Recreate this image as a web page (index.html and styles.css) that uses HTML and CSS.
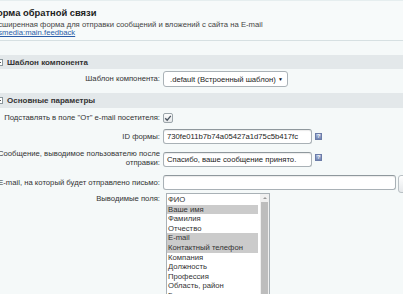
FILE: index.html
```html
<!DOCTYPE html>
<html lang="ru">
<head>
<meta charset="utf-8">
<link rel="stylesheet" href="styles.css">
</head>
<body>
<div class="page">
  <div class="head">
    <div class="title">Форма обратной связи</div>
    <div class="desc">Расширенная форма для отправки сообщений и вложений с сайта на E-mail</div>
    <div class="codeline"><a class="code" href="#">asmedia:main.feedback</a></div>
  </div>
  <div class="spacer"></div>

  <div class="band"><span class="toggle"></span>Шаблон компонента</div>
  <div class="row row-tpl">
    <div class="label">Шаблон компонента:</div>
    <div class="value">
      <div class="select"><span>.default (Встроенный шаблон)</span><span class="arrow">▼</span></div>
    </div>
  </div>

  <div class="band band-2"><span class="toggle"></span>Основные параметры</div>
  <div class="row row-check">
    <div class="label">Подставлять в поле "От" e-mail посетителя:</div>
    <div class="value">
      <span class="checkbox">
        <svg viewBox="0 0 10 10" width="10" height="10"><path d="M2.2 5.2 L4.2 7.2 L7.8 2.8" fill="none" stroke="#4a5560" stroke-width="1.3"/></svg>
      </span>
    </div>
  </div>
  <div class="row row-id">
    <div class="label">ID формы:</div>
    <div class="value">
      <div class="input">730fe011b7b74a05427a1d75c5b417fc</div>
      <span class="help">?</span>
    </div>
  </div>
  <div class="row row-msg">
    <div class="label">Сообщение, выводимое пользователю после отправки:</div>
    <div class="value">
      <div class="input">Спасибо, ваше сообщение принято.</div>
      <span class="help">?</span>
    </div>
  </div>
  <div class="row row-mail">
    <div class="label">E-mail, на который будет отправлено письмо:</div>
    <div class="value">
      <div class="input input-wide"></div>
      <span class="btn"></span>
    </div>
  </div>
  <div class="row row-list">
    <div class="label">Выводимые поля:</div>
    <div class="value">
      <div class="listbox">
        <div class="items">
          <div class="item">ФИО</div>
          <div class="item sel">Ваше имя</div>
          <div class="item">Фамилия</div>
          <div class="item">Отчество</div>
          <div class="item sel">E-mail</div>
          <div class="item sel">Контактный телефон</div>
          <div class="item">Компания</div>
          <div class="item">Должность</div>
          <div class="item">Профессия</div>
          <div class="item">Область, район</div>
          <div class="item">Город</div>
        </div>
        <div class="scroll"><span class="up"></span><span class="thumb"></span></div>
      </div>
    </div>
  </div>
</div>
</body>
</html>
```

FILE: styles.css
```css
html, body {
  margin: 0;
  padding: 0;
  background: #f5f9f9;
  overflow: hidden;
}
body {
  width: 403px;
  height: 294px;
  font-family: "Liberation Sans", Arial, sans-serif;
  color: #333;
}
.page {
  margin-left: -12px;
  width: 430px;
}
.head {
  height: 39px;
  border-top: 1px solid #e6eeef;
  border-bottom: 1px solid #d6e0e2;
  background: #f7fafa;
  padding-left: 1px;
}
.title {
  font-size: 9.4px;
  font-weight: bold;
  line-height: 11px;
  padding-top: 6px;
  color: #222;
}
.desc {
  font-size: 7.7px;
  line-height: 8px;
  margin-top: 3px;
  color: #444;
}
.codeline {
  font-size: 7.7px;
  line-height: 8px;
  padding-left: 5px;
}
.code {
  color: #2a5ca8;
  text-decoration: underline;
}
.spacer {
  height: 14px;
}
.band {
  height: 14px;
  background: #e3e8ea;
  font-size: 8px;
  font-weight: bold;
  color: #333;
  padding-left: 8px;
  display: flex;
  align-items: center;
}
.band-2 {
  height: 15px;
}
.toggle {
  width: 5px;
  height: 5px;
  border: 1px solid #8a979c;
  background: #fff;
  margin-right: 4px;
  position: relative;
}
.toggle::after {
  content: "";
  position: absolute;
  left: 1px;
  top: 2px;
  width: 3px;
  height: 1px;
  background: #555;
}
.row {
  display: flex;
  align-items: flex-start;
  box-sizing: border-box;
  font-size: 7.7px;
  line-height: 9px;
}
.label {
  flex: 0 0 175px;
  box-sizing: border-box;
  text-align: right;
  padding-right: 3px;
  color: #333;
}
.value {
  display: flex;
  align-items: flex-start;
}
.row-tpl {
  height: 24px;
  padding-top: 2px;
}
.row-tpl .label {
  line-height: 16px;
}
.select {
  width: 125px;
  height: 16px;
  box-sizing: border-box;
  border: 1px solid #aab2b7;
  border-radius: 3px;
  background: #fff;
  display: flex;
  align-items: center;
  justify-content: space-between;
  padding: 0 4px 0 6px;
  color: #222;
}
.arrow {
  font-size: 5px;
  color: #111;
}
.row-check {
  height: 18px;
  align-items: center;
}
.checkbox {
  width: 10px;
  height: 10px;
  box-sizing: border-box;
  border: 1px solid #9ca6ab;
  border-radius: 2px;
  background: linear-gradient(#fdfdfd, #e4e7e9);
  display: flex;
  margin-top: 1px;
}
.checkbox svg {
  margin: -1px;
}
.row-id {
  height: 21px;
  padding-top: 3px;
}
.row-id .label {
  line-height: 15px;
}
.row-msg {
  height: 23px;
  padding-top: 2px;
}
.row-msg .input {
  margin-top: 3px;
}
.row-msg .help {
  margin-top: 5px;
}
.row-mail {
  height: 23px;
  padding-top: 5px;
}
.row-mail .label {
  line-height: 15px;
}
.input {
  width: 149px;
  height: 15px;
  box-sizing: border-box;
  border: 1px solid #a9b1b6;
  border-top-color: #8f989d;
  border-radius: 3px;
  background: #fff;
  box-shadow: inset 0 1px 1px rgba(0,0,0,0.08);
  padding-left: 3px;
  line-height: 13px;
  color: #222;
  white-space: nowrap;
  overflow: hidden;
}
.input-wide {
  width: 233px;
}
.help {
  width: 7px;
  height: 7px;
  box-sizing: border-box;
  margin-left: 3px;
  margin-top: 4px;
  background: linear-gradient(#a8b6d6, #7286b4);
  border: 1px solid #6b7ca8;
  color: #fff;
  font-size: 5px;
  font-weight: bold;
  line-height: 5px;
  text-align: center;
}
.btn {
  width: 14px;
  height: 16px;
  margin-left: 2px;
  border: 1px solid #b9c0c4;
  border-radius: 3px;
  background: linear-gradient(#fff, #e6e9eb);
}
.row-list .label {
  padding-top: 1px;
  line-height: 10px;
}
.listbox {
  margin-left: 3px;
  width: 104px;
  height: 110px;
  box-sizing: border-box;
  border: 1px solid #a9b1b6;
  background: #fff;
  display: flex;
}
.items {
  flex: 1;
  padding-top: 1px;
}
.item {
  height: 9.6px;
  line-height: 9.6px;
  padding-left: 1px;
  color: #333;
  white-space: nowrap;
}
.item.sel {
  background: #cbcbcb;
  margin-right: 2px;
}
.scroll {
  width: 9px;
  background: #f0f0f0;
  display: flex;
  flex-direction: column;
  align-items: center;
}
.up {
  width: 0;
  height: 0;
  border-left: 2px solid transparent;
  border-right: 2px solid transparent;
  border-bottom: 2px solid #999;
  margin-top: 3px;
}
.thumb {
  width: 7px;
  flex: 1;
  margin-top: 3px;
  background: #bdbdbd;
}
```
